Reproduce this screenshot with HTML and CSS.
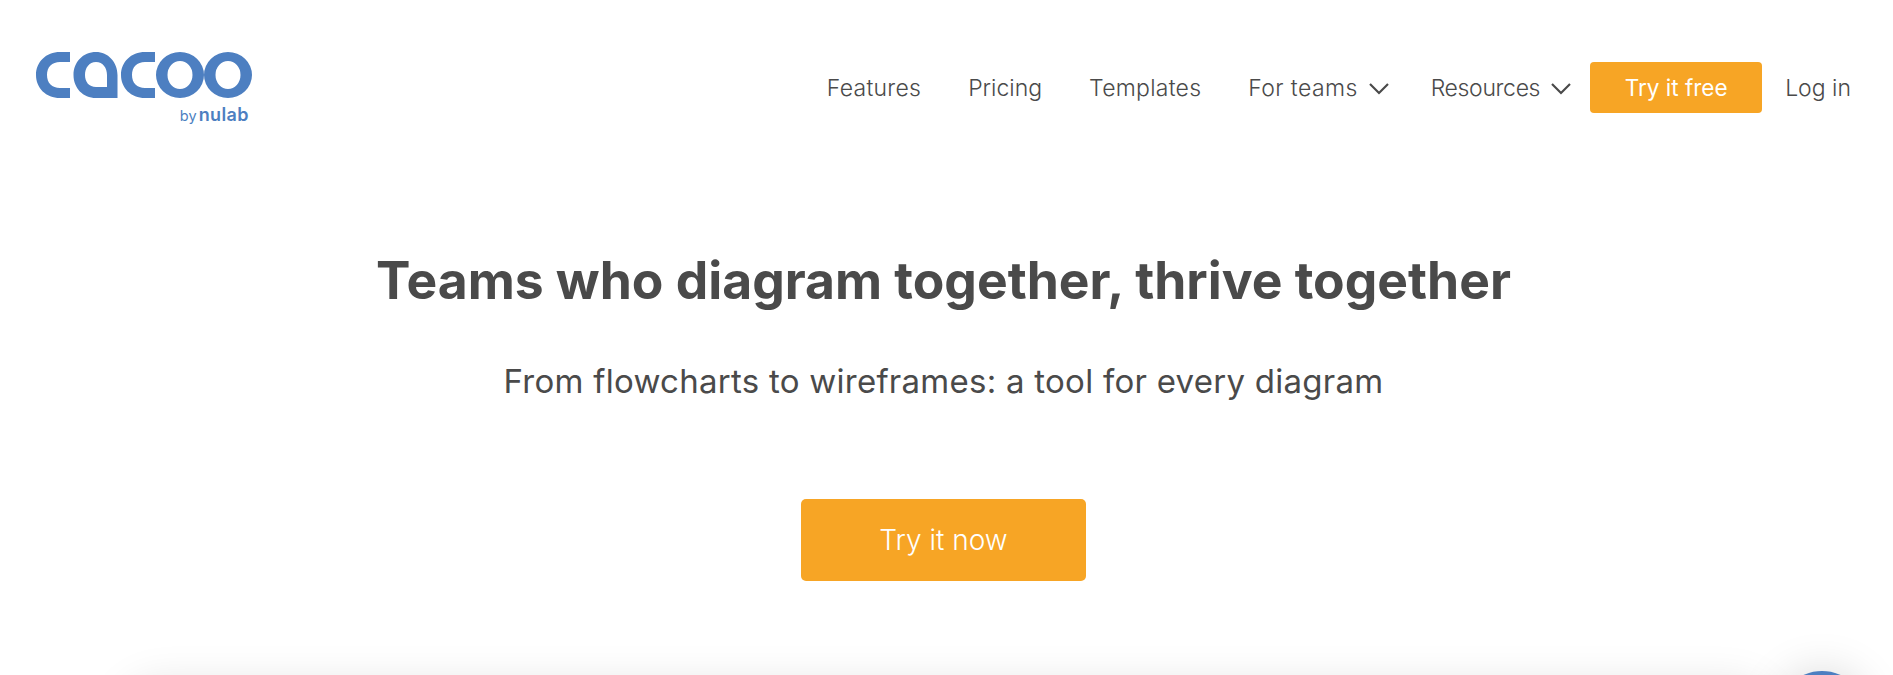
FILE: index.html
```html
<!DOCTYPE html>
<html lang="en">
<head>
    <meta charset="UTF-8">
    <meta name="viewport" content="width=device-width, initial-scale=1.0">
    <title>Cacoo</title>
    <link rel="stylesheet" href="styles.css">
</head>
<body>
    <!-- Header -->
    <header class="header">
        <a href="#" class="logo">
            <svg class="logo-mark" width="216" height="46" viewBox="36 52 216 46" aria-label="Cacoo">
                <path fill-rule="evenodd" d="M70 52H60C46 52 36 62 36 75S46 98 60 98H70V88H60C52 88 47 83 47 75S52 62 60 62H70Z"/>
                <path fill-rule="evenodd" d="M96 52C83 52 73.500 62 73.500 75S83 98 96 98H117.500V75C117.500 62 108 52 96 52ZM96 62C89 62 85 68 85 75S89 87 96 87H107V75C107 68 103 62 96 62Z"/>
                <path fill-rule="evenodd" d="M155 52H145C131 52 121 62 121 75S131 98 145 98H155V88H145C137 88 132 83 132 75S137 62 145 62H155Z"/>
                <path fill-rule="evenodd" d="M180 52A24 23 0 1 0 180 98A24 23 0 1 0 180 52ZM180 61A12.500 14 0 1 1 180 89A12.500 14 0 1 1 180 61Z"/>
                <path fill-rule="evenodd" d="M228 52A24 23 0 1 0 228 98A24 23 0 1 0 228 52ZM228 61A12.500 14 0 1 1 228 89A12.500 14 0 1 1 228 61Z"/>
            </svg>
            <span class="logo-by">by <b>nulab</b></span>
        </a>
        <nav class="nav">
            <a href="#" class="nav-link">Features</a>
            <a href="#" class="nav-link pricing">Pricing</a>
            <a href="#" class="nav-link">Templates</a>
            <a href="#" class="nav-link has-menu">For teams
                <svg class="chevron" width="22" height="13" viewBox="0 0 22 13"><path d="M2 2l9 9 9-9"/></svg>
            </a>
            <a href="#" class="nav-link has-menu">Resources
                <svg class="chevron" width="22" height="13" viewBox="0 0 22 13"><path d="M2 2l9 9 9-9"/></svg>
            </a>
            <a href="#" class="btn-free">Try it free</a>
            <a href="#" class="nav-link login">Log in</a>
        </nav>
    </header>

    <!-- Hero -->
    <section class="hero">
        <h1>Teams who diagram together, thrive together</h1>
        <p class="description">From flowcharts to wireframes: a tool for every diagram</p>
        <a href="#" class="btn-now">Try it now</a>
    </section>

    <!-- Product preview, only its shadow shows above the fold -->
    <div class="preview"></div>

    <div class="chat"></div>
</body>
</html>
```

FILE: styles.css
```css
/* General Styles */
html, body {
    height: 100%;
}

body {
    margin: 0;
    overflow: hidden;
    background: #ffffff;
    color: #4a4a4a;
    font-family: Inter, Arial, sans-serif;
    position: relative;
}

a {
    color: inherit;
    text-decoration: none;
}

/* Header */
.header {
    display: flex;
    justify-content: space-between;
    align-items: flex-start;
    height: 123px;
    padding: 52px 42px 0 36px;
}

.logo {
    display: flex;
    flex-direction: column;
    align-items: flex-end;
    width: 216px;
}

.logo-mark {
    display: block;
    fill: #4d7fc1;
}

.logo-by {
    margin: 7px 3px 0 0;
    font-size: 14.500px;
    line-height: 20px;
    color: #4d7fc1;
    word-spacing: -2px;
}

.logo-by b {
    font-size: 18px;
    font-weight: 600;
    letter-spacing: 0.400px;
}

.nav {
    display: flex;
    align-items: center;
    margin-top: 10px;
}

.nav-link {
    display: flex;
    align-items: center;
    margin-right: 47px;
    padding-top: 1px;
    font-size: 23px;
    font-weight: 300;
    letter-spacing: 0.250px;
    color: #4a4a4a;
}

.pricing {
    letter-spacing: 0;
}

.has-menu {
    gap: 10px;
    margin-right: 41px;
    letter-spacing: 0.400px;
}

.has-menu + .has-menu {
    margin-right: 18px;
    letter-spacing: -0.350px;
}

.login {
    margin: 0 0 0 23px;
    letter-spacing: 0;
}

.chevron {
    fill: none;
    stroke: #4a4a4a;
    stroke-width: 2.200;
}

.btn-free {
    display: flex;
    align-items: center;
    justify-content: center;
    width: 172px;
    height: 51px;
    border-radius: 4px;
    background: #f7a525;
    color: #ffffff;
    font-size: 22.500px;
    font-weight: 400;
}

/* Hero */
.hero {
    display: flex;
    flex-direction: column;
    align-items: center;
    padding-right: 6px;
}

h1 {
    margin: 73px 0 0;
    font-size: 51.600px;
    line-height: 64px;
    font-weight: 700;
    color: #4a4a4a;
}

.description {
    margin: 49px 0 0;
    font-size: 33px;
    line-height: 40px;
    font-weight: 400;
    letter-spacing: 0.260px;
}

.btn-now {
    display: flex;
    align-items: center;
    justify-content: center;
    width: 285px;
    height: 82px;
    margin: 98px 0 0;
    border-radius: 5px;
    background: #f7a525;
    color: #ffffff;
    font-size: 28px;
    font-weight: 300;
}

.preview {
    height: 300px;
    margin: 100px 120px 0;
    border-radius: 40px;
    box-shadow: 0 0 40px rgba(0, 0, 0, 0.1);
}

.chat {
    position: absolute;
    top: 671px;
    left: 1777px;
    width: 90px;
    height: 90px;
    border-radius: 50%;
    background: #4d7fc1;
    box-shadow: 0 0 44px rgba(0, 0, 0, 0.15);
}
```
